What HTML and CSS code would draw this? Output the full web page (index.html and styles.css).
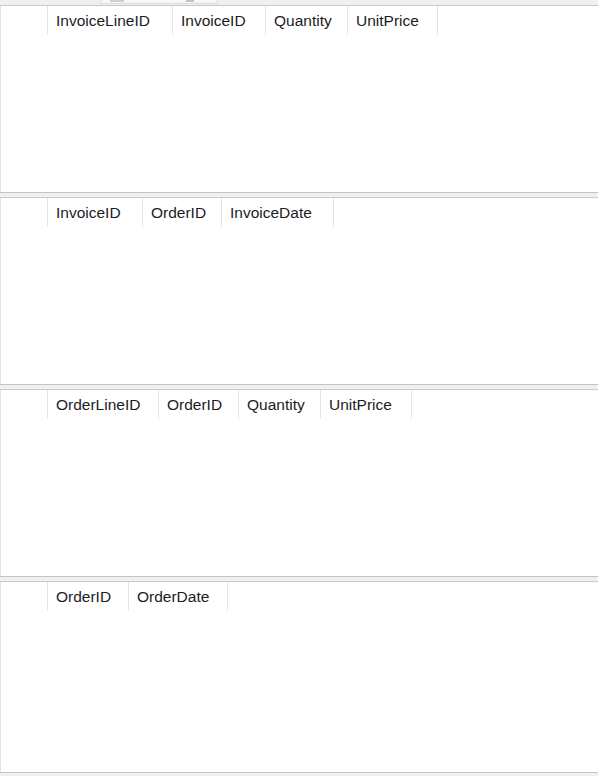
FILE: index.html
```html
<!DOCTYPE html>
<html>
<head>
<meta charset="utf-8">
<link rel="stylesheet" href="styles.css">
</head>
<body>
<div class="topbar"><div class="tool"><span class="knob k1"></span><span class="knob k2"></span></div></div>

<div class="panel">
  <div class="header">
    <div class="rowhead"></div>
    <div class="col" style="width:125px">InvoiceLineID</div>
    <div class="col" style="width:93px">InvoiceID</div>
    <div class="col" style="width:82px">Quantity</div>
    <div class="col" style="width:90px">UnitPrice</div>
  </div>
</div>
<div class="splitter"></div>

<div class="panel">
  <div class="header">
    <div class="rowhead"></div>
    <div class="col" style="width:95px">InvoiceID</div>
    <div class="col" style="width:79px">OrderID</div>
    <div class="col" style="width:112px">InvoiceDate</div>
  </div>
</div>
<div class="splitter"></div>

<div class="panel">
  <div class="header">
    <div class="rowhead"></div>
    <div class="col" style="width:111px">OrderLineID</div>
    <div class="col" style="width:80px">OrderID</div>
    <div class="col" style="width:82px">Quantity</div>
    <div class="col" style="width:91px">UnitPrice</div>
  </div>
</div>
<div class="splitter"></div>

<div class="panel last">
  <div class="header">
    <div class="rowhead"></div>
    <div class="col" style="width:81px">OrderID</div>
    <div class="col" style="width:99px">OrderDate</div>
  </div>
</div>
<div class="bottom"></div>
</body>
</html>
```
FILE: styles.css
```css
html, body {
  margin: 0;
  padding: 0;
  background: #ffffff;
}
body {
  width: 598px;
  height: 776px;
  overflow: hidden;
  display: flex;
  flex-direction: column;
  font-family: "Liberation Sans", Arial, sans-serif;
}
.topbar {
  height: 5px;
  background: #f0f0f0;
  border-bottom: 1px solid #c6c6cc;
  position: relative;
  flex: none;
}
.tool {
  position: absolute;
  left: 100px;
  top: 0;
  width: 116px;
  height: 3px;
  border: 1px solid #dcdcdc;
  border-top: none;
  background: #f7f7f7;
}
.knob {
  position: absolute;
  top: 0;
  height: 2px;
  background: #cfcfcf;
}
.k1 { left: 9px; width: 14px; }
.k2 { left: 85px; width: 8px; background: #c8bfb8; }
.panel {
  height: 186px;
  flex: none;
  background: #ffffff;
  border-left: 1px solid #e2e2e2;
  box-sizing: border-box;
}
.panel.last {
  height: 190px;
}
.header {
  display: flex;
  height: 29px;
}
.rowhead {
  width: 46px;
  flex: none;
  border-right: 1px solid #e4e4e4;
}
.col {
  flex: none;
  box-sizing: border-box;
  border-right: 1px solid #e4e4e4;
  padding-left: 8px;
  font-size: 15.5px;
  line-height: 29px;
  color: #1c1c24;
  white-space: nowrap;
}
.splitter {
  height: 4px;
  flex: none;
  background: #f0f0f0;
  border-top: 1px solid #c2c2c9;
  border-bottom: 1px solid #c8c8ce;
}
.bottom {
  flex: 1;
  background: #f0f0f0;
  border-top: 1px solid #c4c4ca;
}
```
